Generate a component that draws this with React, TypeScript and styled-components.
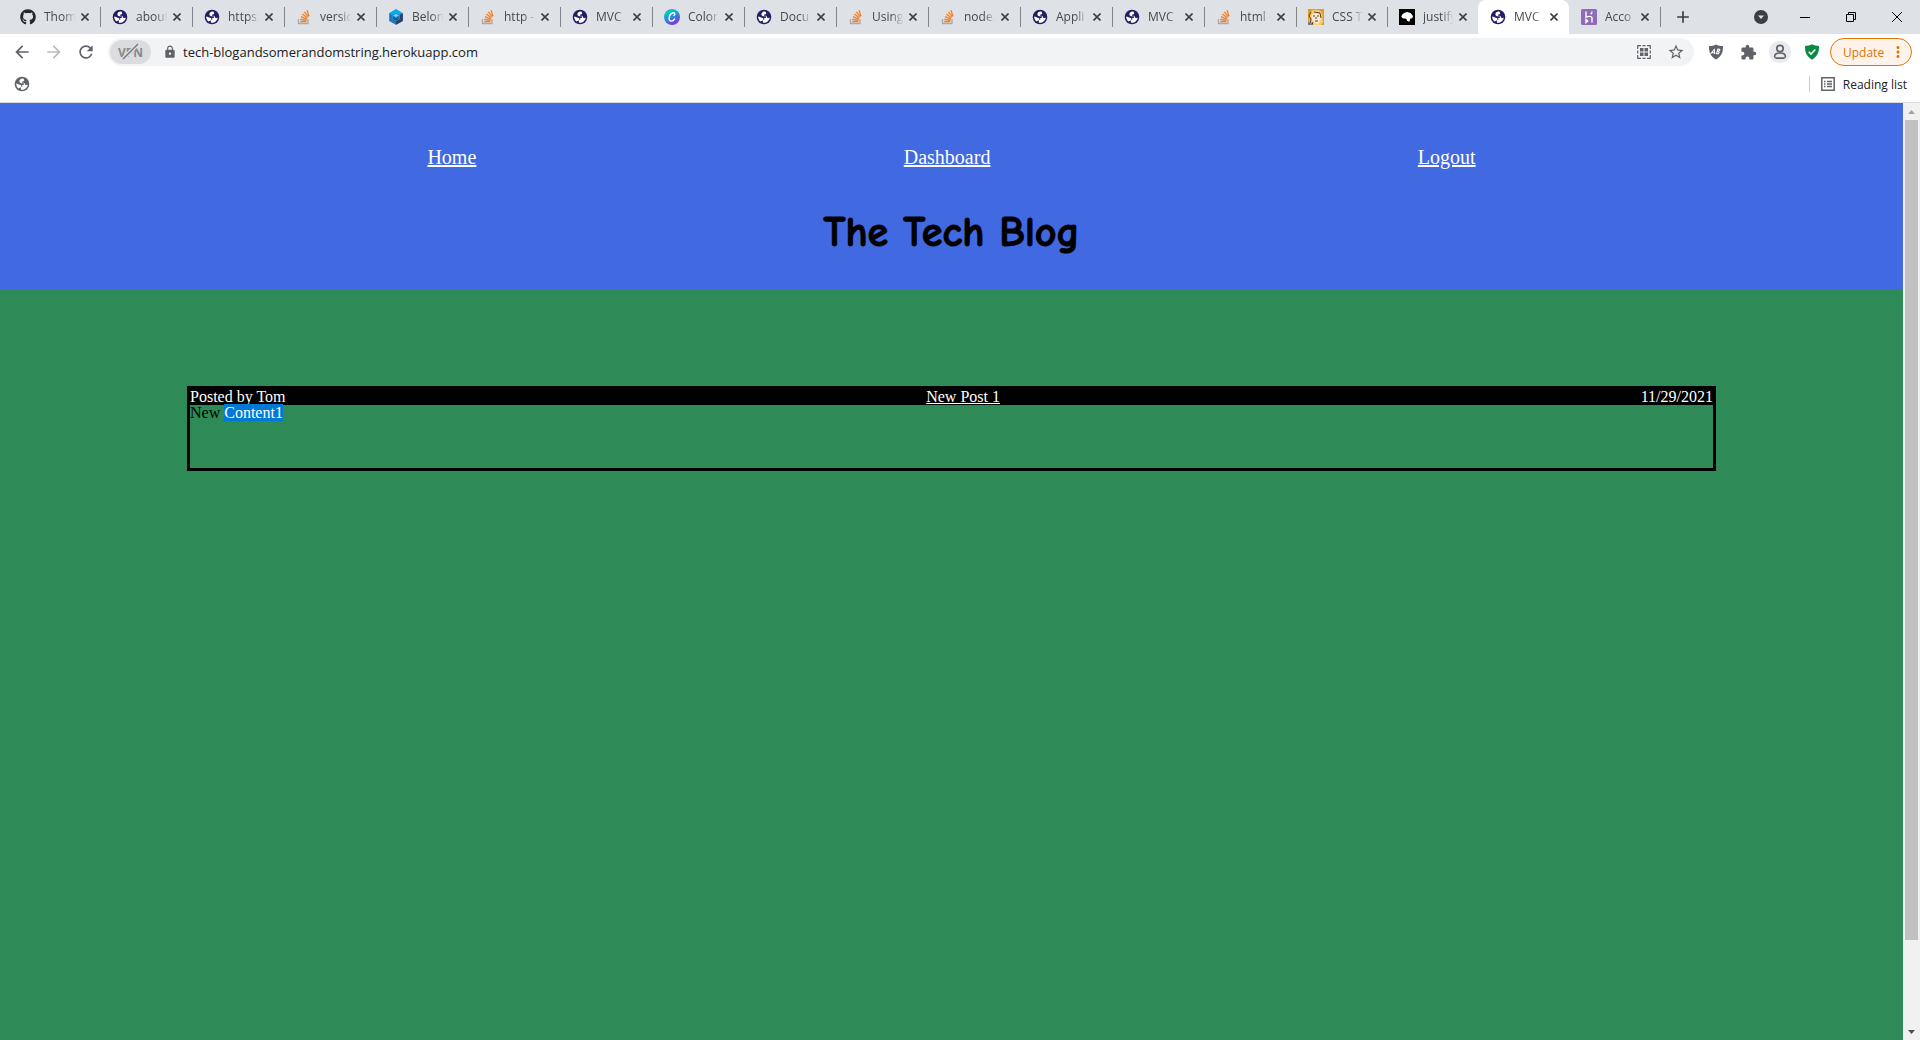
import React from "react";
import styled, { createGlobalStyle } from "styled-components";
import { FaGithub } from "react-icons/fa";
import {
  MdAdd,
  MdArrowBack,
  MdArrowForward,
  MdExtension,
  MdLock,
  MdMoreVert,
  MdRefresh,
  MdStarBorder,
} from "react-icons/md";

const UI_FONT = '"Segoe UI", "Open Sans", sans-serif';
const PAGE_FONT = '"Times New Roman", "Liberation Serif", serif';

const GlobalStyle = createGlobalStyle`
  *, *::before, *::after { box-sizing: border-box; }
  body { margin: 0; }
  button { border: 0; padding: 0; background: none; font: inherit; color: inherit; }
  a { color: inherit; }
`;

const Browser = styled.div`
  display: flex;
  flex-direction: column;
  min-height: 100vh;
  background: #fff;
  font-family: ${UI_FONT};
  color: #202124;
`;

/* ---------- Tab strip ---------- */

const TabStrip = styled.div`
  display: flex;
  height: 34px;
  padding-left: 8px;
  background: #dee1e6;
`;

const TabList = styled.div`
  display: grid;
  flex: 1;
  grid-template-columns: repeat(14, 92fr) repeat(4, 91fr);
  min-width: 0;
`;

const Tab = styled.div<{ $active: boolean; $divider: boolean }>`
  position: relative;
  display: flex;
  align-items: center;
  min-width: 0;
  padding: 0 9px 0 12px;
  border-radius: 8px 8px 0 0;
  background: ${(p) => (p.$active ? "#fff" : "transparent")};
  color: #45494d;
  font-size: 12px;

  &::after {
    content: "";
    display: ${(p) => (p.$divider ? "block" : "none")};
    position: absolute;
    right: -1px;
    top: 7px;
    width: 1px;
    height: 20px;
    background: #808387;
  }
`;

const TabIcon = styled.span`
  display: flex;
  flex: none;
  width: 16px;
  height: 16px;
`;

const TabTitle = styled.span`
  flex: 1;
  min-width: 0;
  margin-left: 8px;
  overflow: hidden;
  white-space: nowrap;
  line-height: 18px;
  mask-image: linear-gradient(to right, #000 55%, transparent 90%);
`;

const IconButton = styled.button<{ $size: number; $dim?: boolean }>`
  display: flex;
  flex: none;
  align-items: center;
  justify-content: center;
  width: ${(p) => p.$size}px;
  height: ${(p) => p.$size}px;
  border-radius: 50%;
  color: ${(p) => (p.$dim ? "#bababc" : "#5f6368")};
`;

const TabClose = styled(IconButton)`
  color: #3c4043;
`;

const WindowControls = styled.div`
  display: flex;
  flex: none;
  align-items: center;
  width: 260px;
  padding-left: 13px;
  color: #3c4043;
`;

const TabSearch = styled(IconButton)`
  margin-left: auto;
  margin-right: 14px;
  color: #3c4043;
`;

const WindowButton = styled.button`
  display: flex;
  align-items: center;
  justify-content: center;
  width: 46px;
  height: 28px;
  color: #000;
`;

/* ---------- Toolbar ---------- */

const Toolbar = styled.div`
  display: flex;
  align-items: center;
  height: 36px;
  padding: 0 8px;
`;

const NavButtons = styled.div`
  display: flex;
  gap: 4px;
  margin-right: 8px;
`;

const AddressBar = styled.div`
  display: flex;
  flex: 1;
  align-items: center;
  min-width: 0;
  height: 28px;
  padding: 0 4px 0 2px;
  border-radius: 14px;
  background: #f1f3f4;
`;

const VpnBadge = styled.button`
  position: relative;
  display: flex;
  align-items: center;
  justify-content: center;
  width: 41px;
  height: 24px;
  margin-right: 12px;
  border-radius: 12px;
  background: #dadce0;
  color: #85888c;
  font-size: 12px;
  font-weight: 700;

  svg {
    position: absolute;
    inset: 0;
  }
`;

const UrlInput = styled.input`
  flex: 1;
  min-width: 0;
  margin-left: 6px;
  padding: 0;
  border: 0;
  outline: 0;
  background: transparent;
  color: #202124;
  font-family: ${UI_FONT};
  font-size: 13px;
`;

const Extensions = styled.div`
  display: flex;
  align-items: center;
  gap: 4px;
  margin: 0 4px 0 8px;
`;

const ProfileButton = styled(IconButton)`
  svg {
    padding: 3px;
    border-radius: 50%;
    background: #e8eaed;
  }
`;

const UpdateButton = styled.button`
  display: flex;
  align-items: center;
  justify-content: space-between;
  width: 82px;
  height: 28px;
  padding: 0 4px 0 12px;
  border: 1px solid #e37400;
  border-radius: 14px;
  background: #fdf3eb;
  color: #e37400;
  font-size: 12px;
`;

/* ---------- Bookmarks bar ---------- */

const BookmarksBar = styled.div`
  display: flex;
  align-items: center;
  justify-content: space-between;
  height: 33px;
  padding: 0 13px 4px 8px;
  border-bottom: 1px solid #dadce0;
`;

const ReadingList = styled.button`
  display: flex;
  align-items: center;
  gap: 8px;
  height: 16px;
  padding-left: 11px;
  border-left: 1px solid #c8cacd;
  color: #202124;
  font-size: 12px;
`;

/* ---------- Page ---------- */

const Viewport = styled.div`
  display: flex;
  flex: 1;
`;

const Page = styled.div`
  flex: 1;
  min-width: 0;
  background: seagreen;
  color: #000;
  font-family: ${PAGE_FONT};
`;

const Header = styled.header`
  padding: 39px 0 30px;
  background: royalblue;
`;

const SiteNav = styled.nav`
  display: flex;
  justify-content: space-evenly;
  color: #fff;
  font-size: 20px;
  line-height: 30px;
`;

const SiteTitle = styled.h1`
  margin: 33px 0 0;
  text-align: center;
  font-family: "Comic Sans MS", "Comic Neue", cursive;
  font-size: 42px;
  font-weight: 700;
  line-height: 55px;
  -webkit-text-stroke: 1px #000;
`;

const Posts = styled.main`
  padding: 96px 187px;
`;

const Post = styled.article`
  min-height: 85px;
  border: 3px solid #000;
  font-size: 16px;
  line-height: 16px;
`;

const PostHeader = styled.div`
  display: flex;
  justify-content: space-between;
  background: #000;
  color: #fff;
`;

const PostBody = styled.p`
  margin: 0;
`;

const Highlight = styled.mark`
  background: #0078d7;
  color: #fff;
`;

/* ---------- Scrollbar ---------- */

const ScrollTrack = styled.div`
  display: flex;
  flex: none;
  flex-direction: column;
  align-items: center;
  width: 17px;
  background: #f1f1f1;
`;

const ScrollThumb = styled.div`
  flex: 820 0 0;
  width: 13px;
  background: #c1c1c1;
`;

const ScrollRest = styled.div`
  flex: 83 0 0;
`;

const ScrollArrow = styled.button<{ $color: string }>`
  display: flex;
  align-items: center;
  justify-content: center;
  width: 17px;
  height: 17px;
  color: ${(p) => p.$color};
`;

/* ---------- Icons ---------- */

const GlobeIcon = ({ color = "#261c66", land = "#fff", size = 16 }) => (
  <svg width={size} height={size} viewBox="0 0 16 16">
    <circle cx="8" cy="8" r="7.3" fill={color} />
    <path
      fill={land}
      d="M9.200 2.600C7 2.400 5.600 3.600 5.400 5c-.2 1.700 1.200 2.300 2.600 2.300h1.400c.9 0 1 1.500 0 1.600H8.200V11H6.900v2.700c3.400.6 6.500-1.900 6.900-5.300-.8.700-1.600.9-2.200.5-.7-.5-.4-1.600-1.400-2-1-.3-2.200.2-2.300-.7 0-.8 1.500-.5 2.100-1.100.5-.5.2-1.500-.8-2.500Z"
    />
    <path fill={land} d="M2.200 7.500c0 2 .8 3.800 2.200 4.900L7.400 11c.3-1.300-.3-2-1.500-2.200-1.400-.2-2.200-1.300-3.700-1.300Z" />
  </svg>
);

const StackIcon = () => (
  <svg width="16" height="16" viewBox="0 0 16 16" fill="none">
    <path d="M2.500 10v4.500h9.500V10" stroke="#a8aaac" strokeWidth="1.300" />
    <path
      d="M4.200 12.500h6.200M4.300 10.200l6.200 1.200M5 7.600l5.800 2.600M6.400 5l5 4M8.400 2.900l3.900 5M11 1.200l2 6"
      stroke="#f48024"
      strokeWidth="1.300"
    />
  </svg>
);

const SequelizeIcon = () => (
  <svg width="16" height="16" viewBox="0 0 16 16">
    <path d="m8 .3 6.800 3.900v7.700L8 15.800l-6.800-3.900V4.200Z" fill="#1c77bd" />
    <path d="m8 .3 6.800 3.900L8 8 1.200 4.200Z" fill="#03afef" />
    <path d="M14.800 4.200v7.700L8 15.800V12l3.600-2V6Z" fill="#2f406a" />
    <path d="m8 3.800 3.800 2.100v4.200L8 12.300l-3.800-2.200V5.900Z" fill="#2a8fce" />
    <path d="m8 5 2.800 1.500L8 8 5.200 6.500Z" fill="#7bd6fa" />
    <path d="m5.200 8 2.800 1.600L10.800 8M5.200 9.500 8 11l2.800-1.500" stroke="#134b80" fill="none" />
  </svg>
);

const CanvaIcon = () => (
  <svg width="16" height="16" viewBox="0 0 16 16">
    <defs>
      <linearGradient id="canva" x1="0.2" y1="0" x2="0.7" y2="1">
        <stop offset="0.2" stopColor="#00c4cc" />
        <stop offset="1" stopColor="#7d2ae8" />
      </linearGradient>
    </defs>
    <circle cx="8" cy="8" r="8" fill="url(#canva)" />
    <path
      d="M10 6.400c1.200-.8 1.200-2.700-.5-2.700-2.600 0-4.500 3.200-4.400 5.800.1 3.600 3.700 3.300 5.400.6"
      stroke="#fff"
      strokeWidth="1.400"
      strokeLinecap="round"
      fill="none"
    />
  </svg>
);

const PortraitIcon = () => (
  <svg width="16" height="16" viewBox="0 0 16 16">
    <path d="M0 0h16v16H0z" fill="#e49a25" />
    <path d="M2 5c1-5 9-6 12-1l1 9-2 3H1Z" fill="#f6cf73" />
    <path d="m4 6 3-2 5 1 1 5-3 5-4-1-2-4Z" fill="#fbe7d2" />
    <path
      d="M3 3 1 7l2 3-1 6h2l1-3M6 3l6 1 1 5M5 7h2M9 7h2M8 8v2M7 12h3"
      stroke="#5a3b26"
      fill="none"
    />
    <path d="M0 13h3l2 3H0z" fill="#7b7c83" />
  </svg>
);

const SpeechIcon = () => (
  <svg width="16" height="16" viewBox="0 0 16 16">
    <path d="M0 0h16v16H0z" fill="#000" />
    <path d="M3 5.700 5 4l3-.9 3.600 1L14 7l-.7 2.200-2.200.5-.6 3-2.300-.7-.9-2.300-3.700-.5-1.300-1.400Z" fill="#fff" />
  </svg>
);

const HerokuIcon = () => (
  <svg width="16" height="16" viewBox="0 0 16 16">
    <rect width="16" height="16" rx="1.500" fill="#8f6bb8" />
    <path
      d="M5 2.500v5.700c2.200-1 6-1.500 6 .8v4.500M11 2.500c0 1.200-.5 2-1.200 2.800M5 10.500v3l1.700-1.500Z"
      stroke="#fff"
      strokeWidth="1.400"
      fill="none"
    />
  </svg>
);

const CloseIcon = () => (
  <svg width="8" height="8" viewBox="0 0 8 8" stroke="currentColor" strokeWidth="1.600">
    <path d="m.5.5 7 7M7.500.5l-7 7" />
  </svg>
);

const QrIcon = () => (
  <svg width="14" height="14" viewBox="0 0 14 14" fill="none" stroke="#5f6368">
    <path
      d="M.7 4V.7H4M5.500.7h3M10 .7h3.300V4M13.300 5.500v3M13.300 10v3.300H10M8.500 13.300h-3M4 13.300H.7V10M.7 8.500v-3"
      strokeWidth="1.200"
    />
    <path d="M3 3h3.500v3.500H3zM7.500 3H11v3.500H7.500zM3 7.500h3.500V11H3zM7.500 7.500H11V11H7.500z" fill="#5f6368" stroke="none" />
  </svg>
);

const BlockerIcon = () => (
  <svg width="16" height="16" viewBox="0 0 16 16">
    <path d="M8 .5c2 1.200 4.300 1.500 7 1.500 0 6-1 10-7 13.500C2 12 1 8 1 2c2.700 0 5-.3 7-1.500Z" fill="#5f6368" />
    <path
      d="m2.500 10 3.800-4.500.4 4.500M4.200 8.700h2.300M8.500 10l1.400-5c2.800-.2 2.600 2-.4 2.300 2.800.1 1.800 2.700-1 2.700"
      stroke="#fff"
      strokeWidth="1.100"
      fill="none"
    />
  </svg>
);

const PersonIcon = () => (
  <svg width="22" height="22" viewBox="0 0 16 16" fill="none" stroke="#5f6368" strokeWidth="1.700">
    <circle cx="8" cy="4.500" r="3.200" />
    <path
      d="M2.600 14.200v-1.700c0-2.400 2.200-3.500 5.400-3.500s5.400 1.100 5.400 3.500v1.700Z"
      strokeLinejoin="round"
    />
  </svg>
);

const ShieldIcon = () => (
  <svg width="16" height="16" viewBox="0 0 16 16">
    <path d="M8 .3c2 1.200 4.300 1.700 7 1.700 0 6-1 10-7 13.700C2 12 1 8 1 2c2.700 0 5-.5 7-1.700Z" fill="#0b8a43" />
    <path d="m4.700 7.700 2.300 2.300 4.300-4.500" stroke="#fff" strokeWidth="1.600" fill="none" />
  </svg>
);

const ListIcon = () => (
  <svg width="14" height="14" viewBox="0 0 14 14" stroke="#5f6368" fill="none">
    <path d="M.8.800h12.400v12.400H.8z" strokeWidth="1.500" />
    <path d="M3 4.500h1.500M3 7h1.500M3 9.500h1.500M6 4.500h5M6 7h5M6 9.500h5" strokeWidth="1.300" />
  </svg>
);

const Triangle = ({ up = false }) => (
  <svg width="7" height="4" viewBox="0 0 7 4" fill="currentColor">
    <path d={up ? "M0 4 3.500 0 7 4Z" : "M0 0h7L3.500 4Z"} />
  </svg>
);

const tabIcons = {
  github: <FaGithub size={16} color="#24292e" />,
  globe: <GlobeIcon />,
  stack: <StackIcon />,
  sequelize: <SequelizeIcon />,
  canva: <CanvaIcon />,
  portrait: <PortraitIcon />,
  speech: <SpeechIcon />,
  heroku: <HerokuIcon />,
};

const tabs: { icon: keyof typeof tabIcons; title: string }[] = [
  { icon: "github", title: "Thom" },
  { icon: "globe", title: "about" },
  { icon: "globe", title: "https:" },
  { icon: "stack", title: "versio" },
  { icon: "sequelize", title: "Belon" },
  { icon: "stack", title: "http -" },
  { icon: "globe", title: "MVC" },
  { icon: "canva", title: "Color" },
  { icon: "globe", title: "Docu" },
  { icon: "stack", title: "Using" },
  { icon: "stack", title: "node." },
  { icon: "globe", title: "Appli" },
  { icon: "globe", title: "MVC" },
  { icon: "stack", title: "html -" },
  { icon: "portrait", title: "CSS T" },
  { icon: "speech", title: "justify" },
  { icon: "globe", title: "MVC" },
  { icon: "heroku", title: "Acco" },
];

const ACTIVE_TAB = 16;

const App = () => (
  <Browser>
    <GlobalStyle />
    <TabStrip>
      <TabList>
        {tabs.map((tab, i) => (
          <Tab key={i} $active={i === ACTIVE_TAB} $divider={i !== ACTIVE_TAB && i !== ACTIVE_TAB - 1}>
            <TabIcon>{tabIcons[tab.icon]}</TabIcon>
            <TabTitle>{tab.title}</TabTitle>
            <TabClose $size={12} aria-label="Close tab">
              <CloseIcon />
            </TabClose>
          </Tab>
        ))}
      </TabList>
      <WindowControls>
        <IconButton $size={20} aria-label="New tab">
          <MdAdd size={20} color="#3c4043" />
        </IconButton>
        <TabSearch $size={14} aria-label="Search tabs">
          <svg width="14" height="14" viewBox="0 0 14 14">
            <circle cx="7" cy="7" r="7" fill="currentColor" />
            <path d="M4 5.500h6L7 9Z" fill="#dee1e6" />
          </svg>
        </TabSearch>
        <WindowButton aria-label="Minimize">
          <svg width="10" height="10" viewBox="0 0 10 10" stroke="currentColor">
            <path d="M0 5.500h10" />
          </svg>
        </WindowButton>
        <WindowButton aria-label="Restore">
          <svg width="10" height="10" viewBox="0 0 10 10" stroke="currentColor" fill="none">
            <path d="M.5 2.500h7v7h-7zM2.500 2.500v-2h7v7h-2" />
          </svg>
        </WindowButton>
        <WindowButton aria-label="Close">
          <svg width="10" height="10" viewBox="0 0 10 10" stroke="currentColor">
            <path d="m0 0 10 10M10 0 0 10" />
          </svg>
        </WindowButton>
      </WindowControls>
    </TabStrip>

    <Toolbar>
      <NavButtons>
        <IconButton $size={28} aria-label="Back">
          <MdArrowBack size={20} />
        </IconButton>
        <IconButton $size={28} $dim aria-label="Forward">
          <MdArrowForward size={20} />
        </IconButton>
        <IconButton $size={28} aria-label="Reload">
          <MdRefresh size={20} />
        </IconButton>
      </NavButtons>
      <AddressBar>
        <VpnBadge>
          VPN
          <svg width="41" height="24" viewBox="0 0 41 24">
            <path d="M13 19 28 4" stroke="#dadce0" strokeWidth="4" />
            <path d="M13 19 28 4" stroke="#76797d" strokeWidth="1.500" />
          </svg>
        </VpnBadge>
        <MdLock size={14} color="#5f6368" />
        <UrlInput aria-label="Address" defaultValue="tech-blogandsomerandomstring.herokuapp.com" />
        <IconButton $size={36} aria-label="QR code">
          <QrIcon />
        </IconButton>
        <IconButton $size={28} aria-label="Bookmark this page">
          <MdStarBorder size={18} />
        </IconButton>
      </AddressBar>
      <Extensions>
        <IconButton $size={28} aria-label="Ad blocker">
          <BlockerIcon />
        </IconButton>
        <IconButton $size={28} aria-label="Extensions">
          <MdExtension size={17} />
        </IconButton>
        <ProfileButton $size={28} aria-label="Profile">
          <PersonIcon />
        </ProfileButton>
        <IconButton $size={28} aria-label="Protection">
          <ShieldIcon />
        </IconButton>
      </Extensions>
      <UpdateButton>
        Update
        <MdMoreVert size={18} />
      </UpdateButton>
    </Toolbar>

    <BookmarksBar>
      <IconButton $size={28} aria-label="Bookmark">
        <GlobeIcon color="#5f6368" />
      </IconButton>
      <ReadingList>
        <ListIcon />
        Reading list
      </ReadingList>
    </BookmarksBar>

    <Viewport>
      <Page>
        <Header>
          <SiteNav>
            <a href="#home">Home</a>
            <a href="#dashboard">Dashboard</a>
            <a href="#logout">Logout</a>
          </SiteNav>
          <SiteTitle>The Tech Blog</SiteTitle>
        </Header>
        <Posts>
          <Post>
            <PostHeader>
              <span>Posted by Tom</span>
              <a href="#post-1">New Post 1</a>
              <span>11/29/2021</span>
            </PostHeader>
            <PostBody>
              New <Highlight>Content1</Highlight>
            </PostBody>
          </Post>
        </Posts>
      </Page>
      <ScrollTrack>
        <ScrollArrow $color="#a3a3a3" aria-label="Scroll up">
          <Triangle up />
        </ScrollArrow>
        <ScrollThumb />
        <ScrollRest />
        <ScrollArrow $color="#505050" aria-label="Scroll down">
          <Triangle />
        </ScrollArrow>
      </ScrollTrack>
    </Viewport>
  </Browser>
);

export default App;
